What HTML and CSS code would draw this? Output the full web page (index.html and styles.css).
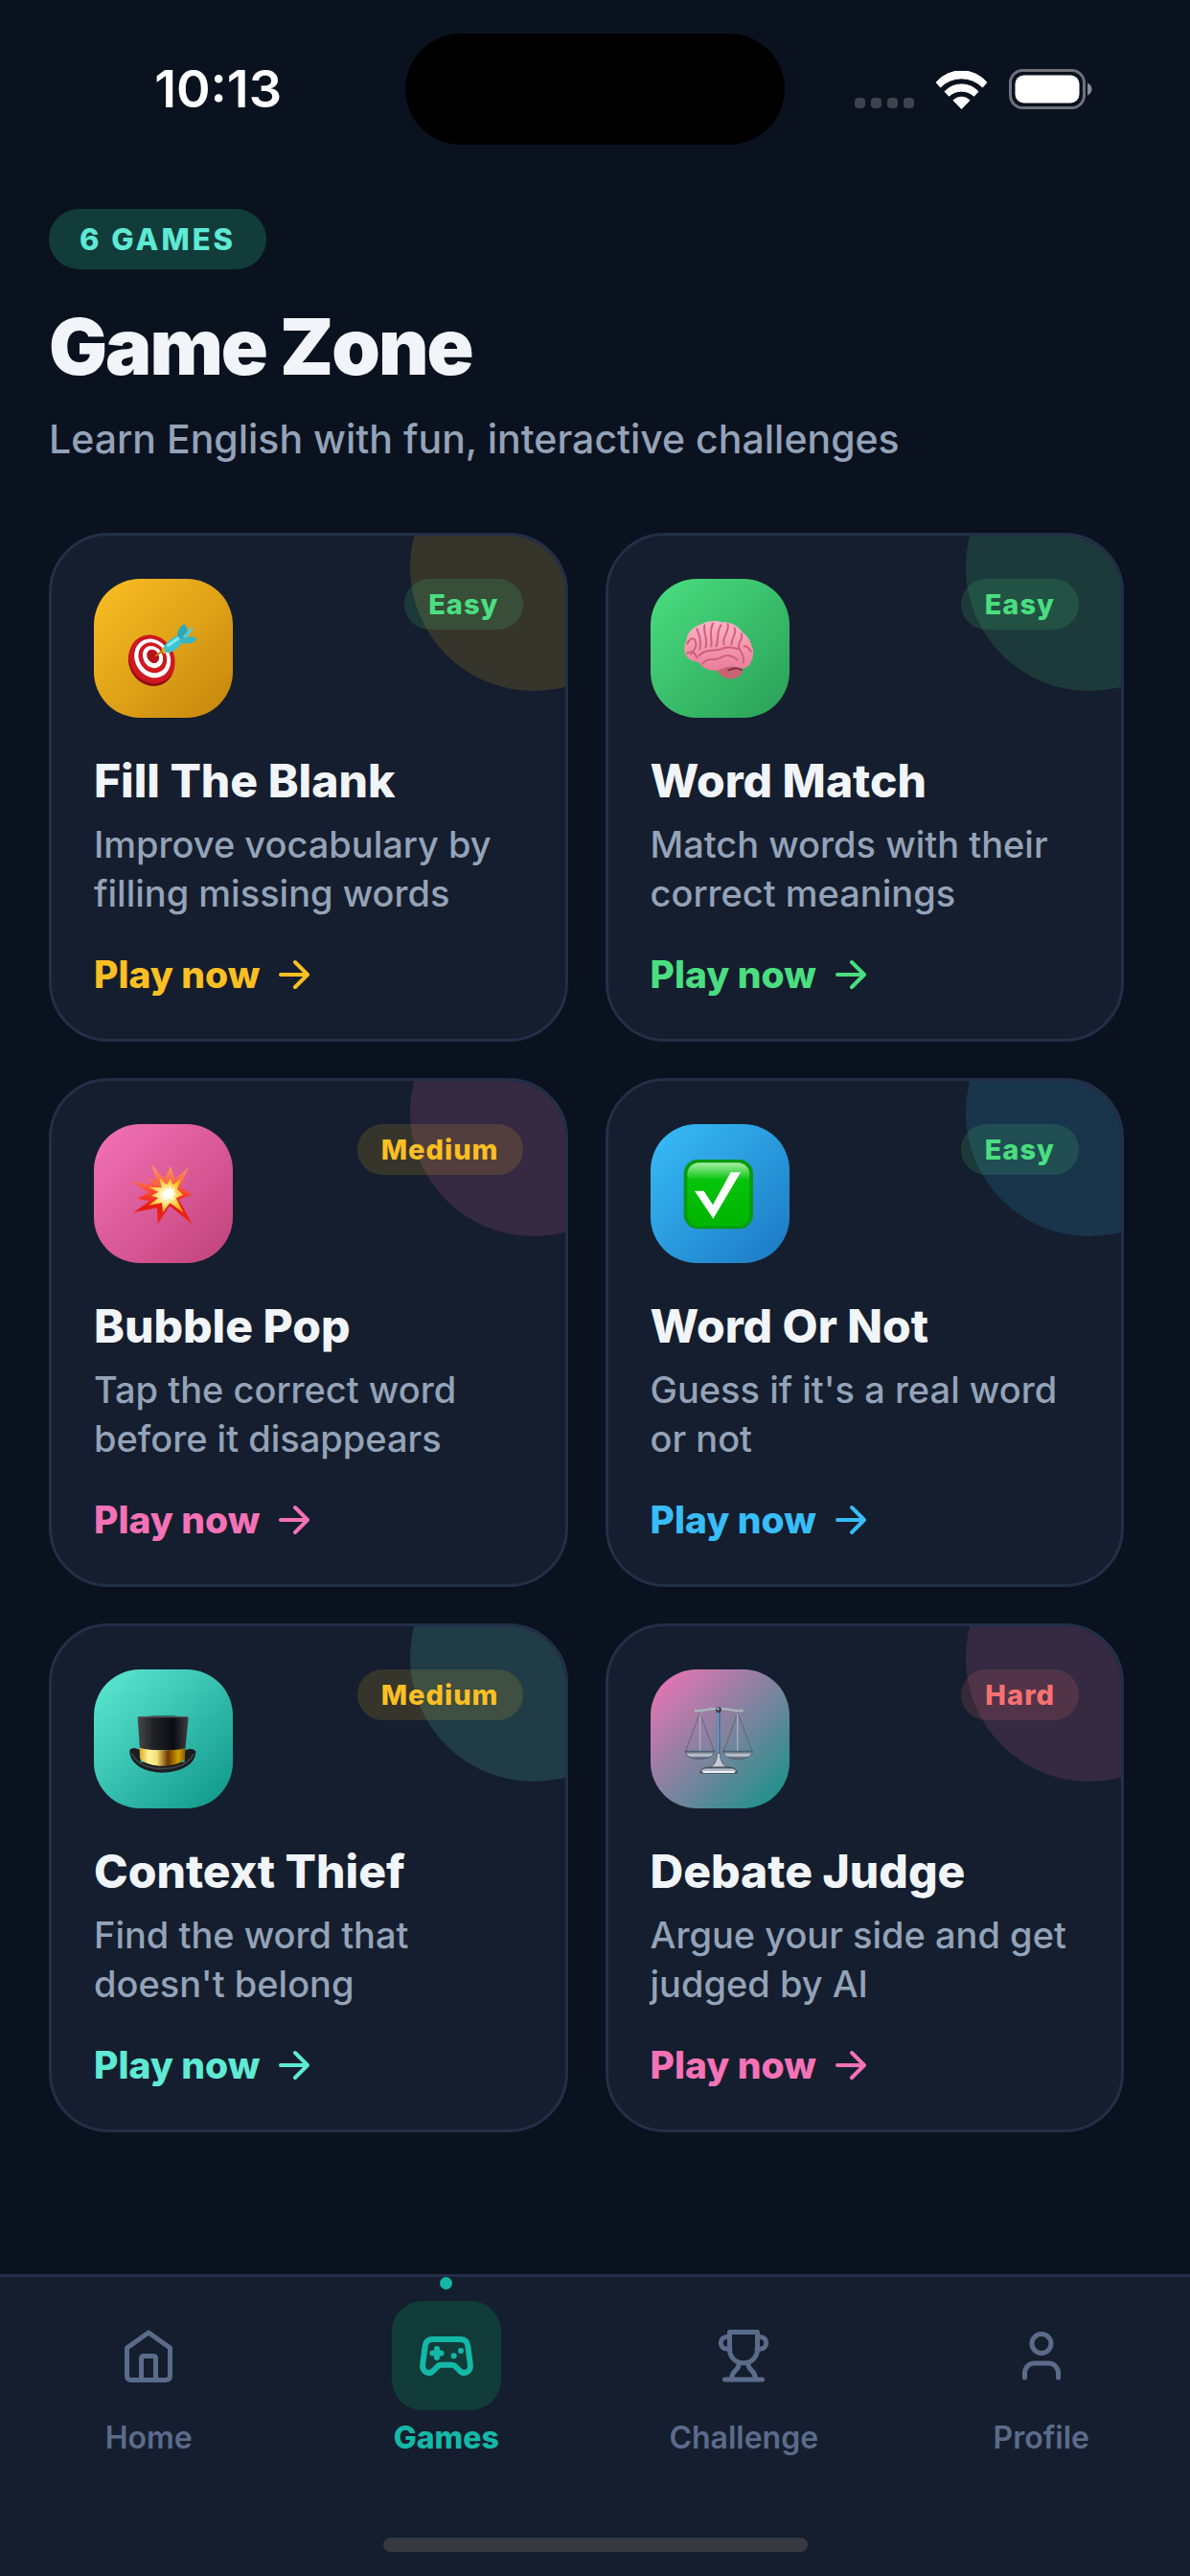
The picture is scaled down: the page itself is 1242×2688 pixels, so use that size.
FILE: index.html
```
<!DOCTYPE html>
<html lang="en">
<head>
    <meta charset="UTF-8">
    <meta name="viewport" content="width=device-width, initial-scale=1.0">
    <title>Game Zone</title>
    <link rel="stylesheet" href="styles.css">
</head>
<body>
    <div class="status-bar">
        <span class="time">10:13</span>
        <div class="island"></div>
        <div class="status-icons">
            <div class="signal"><i></i><i></i><i></i><i></i></div>
            <svg class="wifi" viewBox="0 0 55 40" fill="#fff" stroke="#fff" stroke-linejoin="round">
                <path d="M1 12A35 35 0 0 1 54 12L49.500 17A31 31 0 0 0 5.500 17Z"/>
                <path d="M10 21.500A24 24 0 0 1 45 21.500L40.500 26.300A19 19 0 0 0 14.500 26.300Z"/>
                <path d="M19 30.700A12 12 0 0 1 36 30.700L27.500 39.500Z"/>
            </svg>
            <svg class="battery" viewBox="0 0 88 42">
                <rect x="1.500" y="1.500" width="77" height="39" rx="13" fill="none" stroke="#70727b" stroke-width="3"/>
                <rect x="6.500" y="6.500" width="67" height="29" rx="9" fill="#fff"/>
                <path d="M82 14.500C88 17 88 25 82 27.500Z" fill="#8a8c93"/>
            </svg>
        </div>
    </div>

    <main class="page">
        <header class="page-header">
            <span class="count-pill">6 GAMES</span>
            <h1>Game Zone</h1>
            <p>Learn English with fun, interactive challenges</p>
        </header>

        <section class="game-grid">
            <article class="card yellow">
                <div class="card-top">
                    <div class="card-icon">
                        <!-- dart board -->
                        <svg viewBox="0 0 144 144">
                            <g transform="rotate(-32 60 84)">
                                <ellipse cx="58.500" cy="85.500" rx="23" ry="26" fill="#8f0c12"/>
                                <ellipse cx="60.500" cy="83.500" rx="23" ry="26" fill="#cf1820"/>
                                <ellipse cx="61.500" cy="83" rx="18" ry="21" fill="#fff"/>
                                <ellipse cx="62" cy="82.500" rx="14" ry="16.500" fill="#cf1820"/>
                                <ellipse cx="62.500" cy="82" rx="10" ry="12" fill="#fff"/>
                                <ellipse cx="63" cy="81.500" rx="6" ry="7.500" fill="#b5141b"/>
                            </g>
                            <path d="M64 80L73 73" stroke="#b98216" stroke-width="2"/>
                            <path d="M70 72L75 69L78 75L72 78Z" fill="#e3b417"/>
                            <path d="M73 69C78 63 83 60 88 58L93 63C90 70 85 74 77 77C74 76 72 73 73 69Z" fill="#3cc3d3"/>
                            <path d="M87 60C86 53 89 49 94 47C97 50 98 55 95 59L92 63Z" fill="#2ba9b9"/>
                            <path d="M92 60L101 50L103 52L95 62Z" fill="#57cbd6"/>
                            <path d="M92 62C98 59 103 59 107 62C104 67 96 69 89 65Z" fill="#35b4c3"/>
                            <path d="M77 69L87 62" stroke="#8be8f0" stroke-width="3" stroke-linecap="round"/>
                        </svg>
                    </div>
                    <span class="badge easy">Easy</span>
                </div>
                <h2>Fill The Blank</h2>
                <p class="desc">Improve vocabulary by filling missing words</p>
                <a class="play" href="#">Play now
                    <svg viewBox="0 0 36 36"><path d="M4 18H31M19 5L32 18L19 31"/></svg>
                </a>
            </article>

            <article class="card green">
                <div class="card-top">
                    <div class="card-icon">
                        <!-- brain -->
                        <svg viewBox="0 0 144 144">
                            <defs>
                                <linearGradient id="brain" x1="0" y1="0" x2="0" y2="1">
                                    <stop offset="0" stop-color="#ffb3c4"/>
                                    <stop offset="1" stop-color="#ea7d99"/>
                                </linearGradient>
                            </defs>
                            <path d="M68 93C72 101 78 105 87 103C94 101 97 96 95 89L82 86Z" fill="#c96374"/>
                            <path d="M40 83C34 79 34 69 37 64C38 54 46 49 53 47C60 43 68 43 74 45C82 44 91 49 95 55C102 60 104 66 105 70C108 76 106 82 104 86C102 92 97 94 92 92C86 90 80 91 74 93C66 97 56 95 51 88C48 85 43 86 40 83Z" fill="url(#brain)"/>
                            <g fill="none" stroke="#cf5f80" stroke-width="2" stroke-linecap="round">
                                <path d="M38 67C42 60 46 60 47 67C48 72 44 74 42 78"/>
                                <path d="M48 52C50 58 53 62 51 73"/>
                                <path d="M56 48C54 55 60 62 57 71"/>
                                <path d="M65 46C60 54 64 60 63 70"/>
                                <path d="M73 48C68 55 71 62 68 70"/>
                                <path d="M80 47C82 55 74 60 76 68"/>
                                <path d="M87 51C90 58 83 61 84 68"/>
                                <path d="M94 57C97 63 89 65 92 72C94 78 98 79 96 87"/>
                                <path d="M50 80C57 72 66 75 73 73C80 69 86 71 91 73"/>
                                <path d="M54 88C60 80 66 86 72 82C79 77 86 80 90 84"/>
                                <path d="M38 77C43 74 46 76 48 82M97 70C100 69 102 72 104 75"/>
                            </g>
                            <path d="M80 95C86 92 92 92 95 95" fill="none" stroke="#7d2f3f" stroke-width="2"/>
                        </svg>
                    </div>
                    <span class="badge easy">Easy</span>
                </div>
                <h2>Word Match</h2>
                <p class="desc">Match words with their correct meanings</p>
                <a class="play" href="#">Play now
                    <svg viewBox="0 0 36 36"><path d="M4 18H31M19 5L32 18L19 31"/></svg>
                </a>
            </article>

            <article class="card pink">
                <div class="card-top">
                    <div class="card-icon">
                        <!-- explosion -->
                        <svg viewBox="0 0 435 435">
                            <defs>
                                <linearGradient id="boom" x1="0" y1="0" x2="0" y2="1">
                                    <stop offset="0" stop-color="#ff9a6b"/>
                                    <stop offset="0.500" stop-color="#f8432f"/>
                                    <stop offset="0.700" stop-color="#e51b12"/>
                                    <stop offset="1" stop-color="#f02a1c"/>
                                </linearGradient>
                                <radialGradient id="flash">
                                    <stop offset="0.100" stop-color="#fffef0"/>
                                    <stop offset="0.500" stop-color="#ffe27a"/>
                                    <stop offset="1" stop-color="#ffb818"/>
                                </radialGradient>
                            </defs>
                            <path d="M180 125L220 172L240 131L254 172L297 135L271 196L308 221L266 236L309 315L237 255L200 314L198 262L124 277L174 241L136 233L170 214L118 179L182 190L167 167L196 178Z" fill="url(#boom)"/>
                            <path d="M205 167L228 190L240 170L247 190L273 171L261 204L279 221L257 232L280 277L238 247L216 276L213 246L172 254L202 231L180 224L203 212L170 197L212 199Z" fill="url(#flash)"/>
                            <path d="M224 200L233 205L239 190L243 205L253 200L249 214L258 220L247 226L250 237L236 231L226 238L225 227L211 229L221 219L212 209L225 210Z" fill="#fffef3"/>
                        </svg>
                    </div>
                    <span class="badge medium">Medium</span>
                </div>
                <h2>Bubble Pop</h2>
                <p class="desc">Tap the correct word before it disappears</p>
                <a class="play" href="#">Play now
                    <svg viewBox="0 0 36 36"><path d="M4 18H31M19 5L32 18L19 31"/></svg>
                </a>
            </article>

            <article class="card blue">
                <div class="card-top">
                    <div class="card-icon">
                        <!-- check mark -->
                        <svg viewBox="0 0 435 435">
                            <defs>
                                <linearGradient id="shine" x1="0" y1="0" x2="0" y2="1">
                                    <stop offset="0" stop-color="#a6eea6"/>
                                    <stop offset="0.270" stop-color="#05c40b"/>
                                    <stop offset="1" stop-color="#00b400"/>
                                </linearGradient>
                            </defs>
                            <rect x="104" y="111" width="217" height="217" rx="44" fill="#079a10"/>
                            <rect x="115" y="121" width="195" height="199" rx="36" fill="url(#shine)"/>
                            <path d="M138 209H167L195 253L251 151H282L196 296Z" fill="#fff"/>
                        </svg>
                    </div>
                    <span class="badge easy">Easy</span>
                </div>
                <h2>Word Or Not</h2>
                <p class="desc">Guess if it's a real word or not</p>
                <a class="play" href="#">Play now
                    <svg viewBox="0 0 36 36"><path d="M4 18H31M19 5L32 18L19 31"/></svg>
                </a>
            </article>

            <article class="card teal">
                <div class="card-top">
                    <div class="card-icon">
                        <!-- top hat -->
                        <svg viewBox="0 0 435 435">
                            <defs>
                                <linearGradient id="felt">
                                    <stop offset="0" stop-color="#47484b"/>
                                    <stop offset="0.300" stop-color="#222327"/>
                                    <stop offset="0.700" stop-color="#0b0b12"/>
                                    <stop offset="1" stop-color="#3c3d41"/>
                                </linearGradient>
                                <linearGradient id="band">
                                    <stop offset="0" stop-color="#d9a91c"/>
                                    <stop offset="0.200" stop-color="#fff3a0"/>
                                    <stop offset="0.380" stop-color="#f5df72"/>
                                    <stop offset="0.620" stop-color="#6d3500"/>
                                    <stop offset="0.850" stop-color="#d0a000"/>
                                    <stop offset="1" stop-color="#8a5c00"/>
                                </linearGradient>
                            </defs>
                            <path d="M112 252C118 245 130 245 146 252V290H284V254C300 246 314 248 319 257C319 298 270 322 214 323C158 322 110 296 112 252Z" fill="#1c1d20"/>
                            <path d="M118 262C134 296 170 310 214 311C262 310 298 294 313 264" fill="none" stroke="#43444a" stroke-width="5"/>
                            <path d="M137 150C140 144 292 144 296 150L286 252H144Z" fill="url(#felt)"/>
                            <path d="M139 149H293" stroke="#55565a" stroke-width="4"/>
                            <path d="M143 245C170 255 260 255 286 247L285 280C262 310 168 310 144 278Z" fill="url(#band)"/>
                        </svg>
                    </div>
                    <span class="badge medium">Medium</span>
                </div>
                <h2>Context Thief</h2>
                <p class="desc">Find the word that doesn't belong</p>
                <a class="play" href="#">Play now
                    <svg viewBox="0 0 36 36"><path d="M4 18H31M19 5L32 18L19 31"/></svg>
                </a>
            </article>

            <article class="card rose">
                <div class="card-top">
                    <div class="card-icon">
                        <!-- scales -->
                        <svg viewBox="0 0 435 435">
                            <defs>
                                <linearGradient id="metal" x1="0" y1="0" x2="0" y2="1">
                                    <stop offset="0" stop-color="#4b545c"/>
                                    <stop offset="0.500" stop-color="#c3cedb"/>
                                    <stop offset="1" stop-color="#4c5058"/>
                                </linearGradient>
                            </defs>
                            <g fill="none" stroke="#5d6068" stroke-width="2.500">
                                <path d="M154 136L110 256M154 136L199 256M273 136L229 256M273 136L318 256"/>
                            </g>
                            <path d="M155 138V256M272 138V256" stroke="#a3b1c6" stroke-width="4"/>
                            <path d="M138 128C160 136 176 120 213 124C250 120 266 136 290 128" fill="none" stroke="#a9b7bd" stroke-width="7"/>
                            <path d="M213 130V280" stroke="#50719a" stroke-width="11"/>
                            <path d="M211 134V270" stroke="#8fadc8" stroke-width="3"/>
                            <circle cx="213" cy="127" r="9" fill="#39434d"/>
                            <circle cx="211" cy="124" r="3" fill="#e8f0f6"/>
                            <path d="M108 256H200C196 274 180 280 154 280S112 274 108 256ZM227 256H320C315 274 299 280 273 280S231 274 227 256Z" fill="url(#metal)" stroke="#4a5f78" stroke-width="3"/>
                            <path d="M209 262H217C219 290 228 300 240 308H186C198 300 207 290 209 262Z" fill="#c3ccd6" stroke="#5a626c" stroke-width="3"/>
                            <path d="M156 324C158 304 180 306 213 306S268 304 271 324Z" fill="url(#metal)" stroke="#3c3f46" stroke-width="3"/>
                            <path d="M164 321H263" stroke="#eef2fa" stroke-width="6"/>
                        </svg>
                    </div>
                    <span class="badge hard">Hard</span>
                </div>
                <h2>Debate Judge</h2>
                <p class="desc">Argue your side and get judged by AI</p>
                <a class="play" href="#">Play now
                    <svg viewBox="0 0 36 36"><path d="M4 18H31M19 5L32 18L19 31"/></svg>
                </a>
            </article>
        </section>
    </main>

    <nav class="tab-bar">
        <div class="tabs">
            <a class="tab" href="#">
                <span class="tab-icon">
                    <svg viewBox="0 0 66 66">
                        <path d="M33 9L55.500 25V54Q55.500 58.500 51 58.500H15Q10.500 58.500 10.500 54V25Z"/>
                        <path d="M25.500 58V36Q25.500 33.500 28 33.500H38Q40.500 33.500 40.500 36V58"/>
                    </svg>
                </span>
                Home
            </a>
            <a class="tab active" href="#">
                <span class="tab-icon">
                    <svg viewBox="0 0 66 66" class="bold">
                        <path d="M19 16H47Q54.500 16 55.300 23L57.800 42C59 50 51 54 46 48L42 44Q40.600 42.700 38.500 42.700H27.500Q25.400 42.700 24 44L20 48C15 54 7 50 8.200 42L10.700 23Q11.500 16 19 16Z"/>
                        <path d="M18.500 30.500H27.500M23 26V35M40.700 33.300V33.301M48 28V28.001"/>
                    </svg>
                </span>
                Games
            </a>
            <a class="tab" href="#">
                <span class="tab-icon">
                    <svg viewBox="0 0 66 66">
                        <path d="M18.500 8.500H47.500V26C47.500 35 41 40.700 33 40.700S18.500 35 18.500 26Z"/>
                        <path d="M18.500 13.500H15.500A6 6 0 0 0 15.500 26H19M47.500 13.500H50.500A6 6 0 0 1 50.500 26H47"/>
                        <path d="M28 41C29 49 21 47 20.500 57M38 41C37 49 45 47 45.500 57M13.500 58H52.500"/>
                    </svg>
                </span>
                Challenge
            </a>
            <a class="tab" href="#">
                <span class="tab-icon">
                    <svg viewBox="0 0 66 66">
                        <circle cx="33" cy="20.500" r="10"/>
                        <path d="M15.500 56V51A10 10 0 0 1 25.500 41H40.500A10 10 0 0 1 50.500 51V56"/>
                    </svg>
                </span>
                Profile
            </a>
        </div>
        <div class="home-indicator"></div>
    </nav>
</body>
</html>
```
FILE: styles.css
```
* {
    margin: 0;
    padding: 0;
    box-sizing: border-box;
}

body {
    font-family: Inter, "Liberation Sans", sans-serif;
    background-color: #0b121f;
    color: #f1f5f9;
    min-height: 100vh;
    display: flex;
    flex-direction: column;
}

a {
    color: inherit;
    text-decoration: none;
}

/* status bar */
.status-bar {
    display: grid;
    grid-template-columns: 1fr 396px 1fr;
    align-items: center;
    padding-top: 35px;
}

.time {
    justify-self: end;
    padding-right: 129px;
    font-size: 54px;
    font-weight: 600;
    line-height: 60px;
    color: #fff;
}

.island {
    height: 116px;
    border-radius: 58px;
    background: #000;
}

.status-icons {
    display: flex;
    justify-content: flex-end;
    align-items: flex-end;
    gap: 22px;
    padding-right: 101px;
}

.signal {
    display: flex;
    gap: 6px;
    padding-bottom: 1px;
}

.signal i {
    width: 11px;
    height: 11px;
    border-radius: 4px;
    background: #40424e;
}

.wifi {
    width: 55px;
    height: 40px;
}

.battery {
    width: 88px;
    height: 42px;
}

/* header */
.page {
    padding: 67px 69px 40px 51px;
}

.page-header {
    margin-bottom: 71px;
}

.count-pill {
    display: block;
    width: fit-content;
    padding: 12px 32px;
    border-radius: 32px;
    background: #113c3a;
    color: #5eead4;
    font-size: 31px;
    font-weight: 800;
    line-height: 39px;
    letter-spacing: 3px;
}

.page-header h1 {
    margin-top: 33px;
    font-size: 81px;
    font-weight: 900;
    line-height: 96px;
    letter-spacing: -2px;
}

.page-header p {
    margin-top: 21px;
    color: #94a3b8;
    font-size: 41px;
    font-weight: 500;
    line-height: 54px;
}

/* cards */
.game-grid {
    display: grid;
    grid-template-columns: 1fr 1fr;
    gap: 38px 39px;
}

.card {
    --accent: #fbbf24;
    --accent-end: #c4860c;
    --tint: rgba(251, 191, 36, 0.15);
    position: relative;
    overflow: hidden;
    padding: 45px 44px;
    border: 3px solid #232f48;
    border-radius: 62px;
    background: #151e2e;
}

/* tinted circle in the corner */
.card::before {
    content: "";
    position: absolute;
    top: -96px;
    right: -96px;
    width: 258px;
    height: 258px;
    border-radius: 50%;
    background: var(--tint);
}

.green {
    --accent: #4ade80;
    --accent-end: #2b9f57;
    --tint: rgba(74, 222, 128, 0.15);
}

.pink {
    --accent: #f472b6;
    --accent-end: #c0437a;
    --tint: rgba(244, 114, 182, 0.15);
}

.blue {
    --accent: #38bdf8;
    --accent-end: #1c78c2;
    --tint: rgba(56, 189, 248, 0.15);
}

.teal {
    --accent: #5eead4;
    --accent-end: #0d9488;
    --tint: rgba(94, 234, 212, 0.15);
}

.rose {
    --accent: #f472b6;
    --accent-end: #0d9488;
    --tint: rgba(244, 114, 182, 0.15);
}

.card-top {
    position: relative;
    display: flex;
    justify-content: space-between;
    align-items: flex-start;
}

.card-icon {
    width: 145px;
    height: 145px;
    border-radius: 48px;
    background: linear-gradient(135deg, var(--accent), var(--accent-end));
}

.card-icon svg {
    display: block;
    width: 100%;
    height: 100%;
}

.badge {
    padding: 8px 25px;
    border-radius: 27px;
    font-size: 29px;
    font-weight: 800;
    line-height: 37px;
    letter-spacing: 1px;
}

.easy {
    color: #4ade80;
    background: rgba(74, 222, 128, 0.15);
}

.medium {
    color: #fbbf24;
    background: rgba(251, 191, 36, 0.15);
}

.hard {
    color: #f87171;
    background: rgba(248, 113, 113, 0.15);
}

.card h2 {
    margin-top: 36px;
    font-size: 48px;
    font-weight: 800;
    line-height: 60px;
}

.desc {
    margin-top: 11px;
    color: #94a3b8;
    font-size: 38px;
    font-weight: 500;
    line-height: 51px;
}

.play {
    display: flex;
    align-items: center;
    gap: 18px;
    width: fit-content;
    margin-top: 37px;
    color: var(--accent);
    font-size: 39px;
    font-weight: 800;
    line-height: 44px;
}

.play svg {
    width: 36px;
    height: 36px;
    fill: none;
    stroke: currentColor;
    stroke-width: 4;
    stroke-linecap: round;
    stroke-linejoin: round;
}

/* bottom tabs */
.tab-bar {
    position: sticky;
    bottom: 0;
    margin-top: auto;
    padding-bottom: 25px;
    border-top: 3px solid #232f48;
    background: #151e2e;
}

.tabs {
    display: grid;
    grid-template-columns: repeat(4, 1fr);
}

.tab {
    position: relative;
    display: flex;
    flex-direction: column;
    align-items: center;
    gap: 8px;
    padding-top: 25px;
    color: #5b6b8a;
    font-size: 32px;
    font-weight: 600;
    line-height: 42px;
}

.tab-icon {
    display: flex;
    align-items: center;
    justify-content: center;
    width: 114px;
    height: 114px;
    border-radius: 32px;
}

.tab-icon svg {
    width: 66px;
    height: 66px;
    fill: none;
    stroke: currentColor;
    stroke-width: 5;
    stroke-linecap: round;
    stroke-linejoin: round;
}

.tab-icon .bold {
    stroke-width: 6;
}

.tab.active {
    color: #14b8a6;
    font-weight: 800;
}

.tab.active .tab-icon {
    background: #113c3a;
}

.tab.active::before {
    content: "";
    position: absolute;
    top: 0;
    width: 13px;
    height: 13px;
    border-radius: 50%;
    background: #14b8a6;
}

.home-indicator {
    width: 443px;
    height: 15px;
    margin: 83px auto 0;
    border-radius: 8px;
    background: #36393f;
}
```
